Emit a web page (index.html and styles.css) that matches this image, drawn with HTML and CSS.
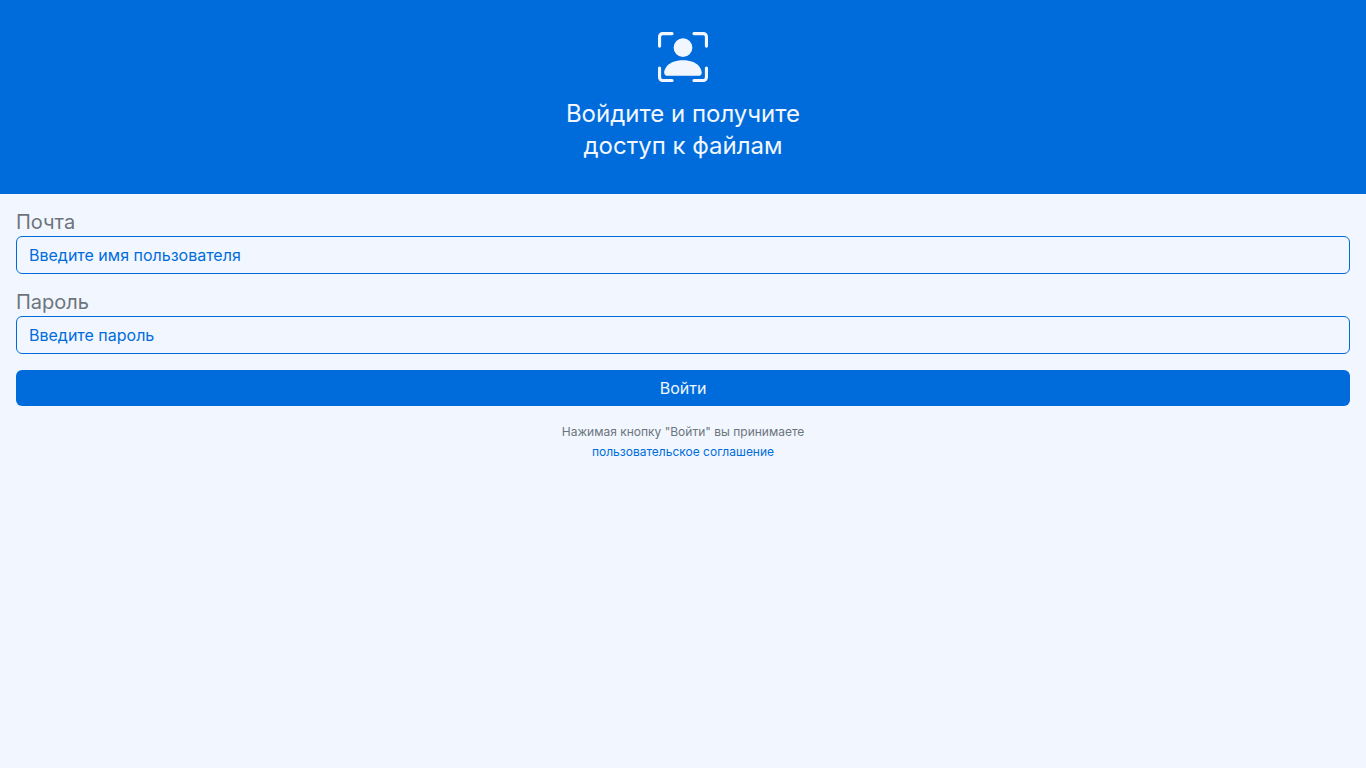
FILE: index.html
```html
<!DOCTYPE html>
<html lang="ru">
<head>
<meta charset="utf-8">
<meta name="viewport" content="width=device-width, initial-scale=1">
<title>Вход</title>
<link rel="stylesheet" href="styles.css">
</head>
<body>
<header class="hero">
  <svg class="hero-icon" viewBox="0 0 16 16" fill="currentColor" aria-hidden="true">
    <path d="M1.5 1a.5.5 0 0 0-.5.5v3a.5.5 0 0 1-1 0v-3A1.5 1.5 0 0 1 1.5 0h3a.5.5 0 0 1 0 1h-3zM11 .5a.5.5 0 0 1 .5-.5h3A1.5 1.5 0 0 1 16 1.5v3a.5.5 0 0 1-1 0v-3a.5.5 0 0 0-.5-.5h-3a.5.5 0 0 1-.5-.5zM.5 11a.5.5 0 0 1 .5.5v3a.5.5 0 0 0 .5.5h3a.5.5 0 0 1 0 1h-3A1.5 1.5 0 0 1 0 14.5v-3a.5.5 0 0 1 .5-.5zm15 0a.5.5 0 0 1 .5.5v3a1.5 1.5 0 0 1-1.5 1.5h-3a.5.5 0 0 1 0-1h3a.5.5 0 0 0 .5-.5v-3a.5.5 0 0 1 .5-.5z"/>
    <path d="M3 14s-1 0-1-1 1-4 6-4 6 3 6 4-1 1-1 1H3zm8-9a3 3 0 1 1-6 0 3 3 0 0 1 6 0z"/>
  </svg>
  <h1 class="hero-title">Войдите и получите<br>доступ к файлам</h1>
</header>
<main>
  <form class="login">
    <div class="field">
      <label class="label" for="email">Почта</label>
      <input class="input" id="email" type="text" placeholder="Введите имя пользователя">
    </div>
    <div class="field">
      <label class="label" for="password">Пароль</label>
      <input class="input" id="password" type="password" placeholder="Введите пароль">
    </div>
    <button class="submit" type="submit">Войти</button>
    <p class="terms">Нажимая кнопку "Войти" вы принимаете<br><a class="link" href="#">пользовательское соглашение</a></p>
  </form>
</main>
</body>
</html>
```
FILE: styles.css
```css
* {
  box-sizing: border-box;
}

body {
  margin: 0;
  background: #f2f7ff;
  color: #6c757d;
  font: 400 16px/24px Inter, sans-serif;
}

.hero {
  display: flex;
  flex-direction: column;
  align-items: center;
  gap: 16px;
  padding: 32px 16px;
  background: #006cdc;
  color: #f2f7ff;
}

.hero-icon {
  width: 50px;
  height: 50px;
}

.hero-title {
  margin: 0;
  font-size: 24px;
  font-weight: 400;
  line-height: 32px;
  text-align: center;
}

.login {
  display: flex;
  flex-direction: column;
  gap: 16px;
  padding: 16px;
}

.field {
  display: flex;
  flex-direction: column;
  gap: 2px;
}

.label {
  font-size: 20px;
  line-height: 24px;
}

.input {
  width: 100%;
  height: 38px;
  padding: 6px 12px;
  border: 1px solid #006cdc;
  border-radius: 6px;
  background: transparent;
  color: #006cdc;
  font: inherit;
}

.input::placeholder {
  color: #006cdc;
  opacity: 1;
}

.submit {
  height: 36px;
  padding: 6px 12px;
  border: 0;
  border-radius: 6px;
  background: #006cdc;
  color: #f2f7ff;
  font: inherit;
}

.terms {
  margin: 0;
  font-size: 12px;
  line-height: 20px;
  text-align: center;
}

.link {
  color: #006cdc;
  text-decoration: none;
}
```
